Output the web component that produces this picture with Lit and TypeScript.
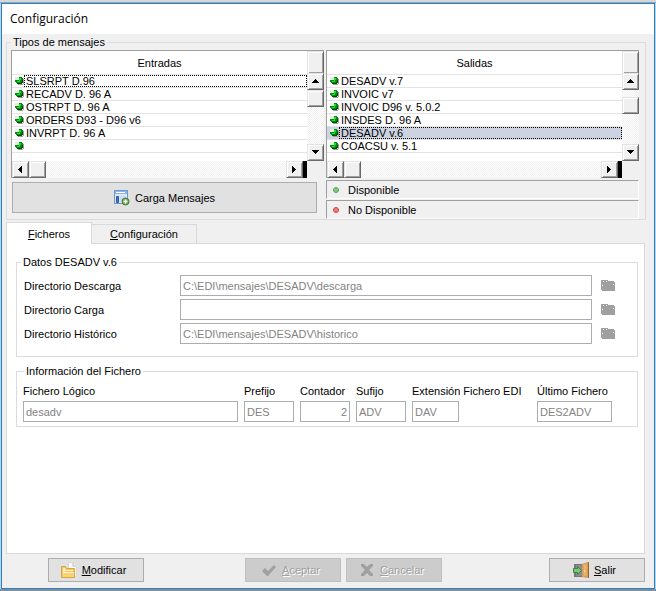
import { LitElement, html, svg, css } from "lit";
import { customElement, property, state } from "lit/decorators.js";
import { classMap } from "lit/directives/class-map.js";

const base = css`
  * { box-sizing: border-box; }
  button, input, table { font: inherit; color: inherit; }
  button { margin: 0; padding: 0; border-radius: 0; }
  svg { display: block; flex: none; }
`;

@customElement("scroll-arrow")
class ScrollArrow extends LitElement {
  @property() dir = "up";
  static styles = [base, css`
    :host { display: block; width: 17px; height: 17px; flex: none; }
    .key {
      display: grid; place-items: center; width: 100%; height: 100%;
      background: #f0f0f0; border: 1px solid; border-color: #e3e3e3 #696969 #696969 #e3e3e3;
      box-shadow: inset 1px 1px #fff, inset -1px -1px #a0a0a0;
    }
  `];
  render() {
    const shapes: Record<string, string> = {
      up: "M3 1h1v1h1v1h1v1h1v1H0V4h1V3h1V2h1z",
      down: "M0 1h7v1H6v1H5v1H4v1H3V4H2V3H1V2H0z",
      left: "M5 0v7H4V6H3V5H2V4H1V3h1V2h1V1h1V0z",
      right: "M1 0h1v1h1v1h1v1h1v1H4v1H3v1H2v1H1z",
    };
    return html`<button class="key" aria-label=${this.dir}>
      <svg width="7" height="7" viewBox="0 0 7 7" shape-rendering="crispEdges"><path d=${shapes[this.dir]} /></svg>
    </button>`;
  }
}

@customElement("message-list")
class MessageList extends LitElement {
  @property() heading = "";
  @property({ type: Array }) rows: string[] = [];
  @property({ type: Number }) current = 0;
  @property({ type: Boolean }) filled = false;
  @property({ type: Boolean }) scrolled = false;
  static styles = [base, css`
    :host {
      display: grid; grid-template-columns: minmax(0, 1fr) 17px; grid-template-rows: 1fr 17px;
      border-top: 1px solid #a0a0a0; border-left: 1px solid #a0a0a0; background: #fff;
    }
    table { width: 100%; border-collapse: separate; border-spacing: 0; table-layout: fixed; align-self: start; }
    th { height: 24px; padding: 0; font-weight: normal; text-align: center; border-bottom: 1px solid #e3e3e3; }
    td { height: 13px; padding: 0; border-bottom: 1px solid #e3e3e3; }
    .line { display: flex; align-items: center; height: 12px; padding-left: 3px; }
    .name { flex: 1; height: 12px; line-height: 12px; padding-left: 2px; white-space: nowrap; }
    .focus .name { outline: 1px dotted #000; outline-offset: -1px; }
    .fill { background: #cdd3e1; }
    .track {
      display: flex;
      background: repeating-conic-gradient(#fff 0 25%, #f0f0f0 0 50%) 0 0 / 2px 2px;
    }
    .vertical { flex-direction: column; }
    .cap { height: 22px; }
    .cap, .thumb {
      background: #f0f0f0; border: 1px solid; border-color: #e3e3e3 #696969 #696969 #e3e3e3;
      box-shadow: inset 1px 1px #fff, inset -1px -1px #a0a0a0;
    }
    .cap { border-bottom: 0; }
    .thumb { width: 17px; height: 17px; flex: none; }
    .lower { margin-top: 7px; }
    .end { margin-top: auto; }
    .far { margin-left: auto; }
    .stop { width: 4px; background: #000; }
    .corner { background: #f0f0f0; }
  `];
  render() {
    return html`
      <table>
        <thead><tr><th scope="col">${this.heading}</th></tr></thead>
        <tbody>
          ${this.rows.map((r, i) => html`
            <tr class=${classMap({ focus: i === this.current, fill: this.filled && i === this.current })}>
              <td><div class="line">
                <svg width="9" height="9" viewBox="0 0 9 9" shape-rendering="crispEdges">
                  <path d="M8 2h1v5H8v1H3V7h5z" fill="#9c9c9c" />
                  <path d="M4 0h3v1h1v5H7v1H2V6H1V5H0V3h4z" fill="#078a10" />
                  <path d="M0 0h4v3H0z" fill="#e4ece4" />
                  <path d="M4 1h2v2H5v2H2V4h2z" fill="#1fe02a" />
                  <path d="M7 3h1v3H7v1H2V6h4V5h1z" fill="#04470a" />
                </svg>
                <span class="name">${r}</span>
              </div></td>
            </tr>`)}
        </tbody>
      </table>
      <div class="track vertical">
        <div class="cap"></div>
        <scroll-arrow dir="up"></scroll-arrow>
        <div class=${classMap({ thumb: true, lower: this.scrolled })}></div>
        <scroll-arrow class="end" dir="down"></scroll-arrow>
      </div>
      <div class="track">
        <scroll-arrow dir="left"></scroll-arrow>
        <div class="thumb"></div>
        <scroll-arrow class="far" dir="right"></scroll-arrow>
        <div class="stop"></div>
      </div>
      <div class="corner"></div>
    `;
  }
}

const icons = {
  load: svg`<svg width="16" height="16" viewBox="0 0 16 16">
    <rect x=".5" y=".5" width="13" height="13" fill="#dbe8fa" stroke="#6d98d0" />
    <path d="M1 1h12v3H1z" fill="#8fb4e8" /><path d="M2 2h9v1H2z" fill="#fff" />
    <path d="M2.5 6.5h2v6h-2z" fill="#4c78bd" stroke="#2e5aa0" /><path d="M6 6h6v6H6z" fill="#c9dcf6" />
    <circle cx="11.5" cy="11.5" r="3.5" fill="#75a957" stroke="#47792f" />
    <path d="M9.5 11.5h4M11.5 9.5v4" stroke="#fff" stroke-width="1.4" />
  </svg>`,
  edit: svg`<svg width="16" height="16" viewBox="0 0 16 16">
    <path d="M7.500.5h5l3 3v11h-8z" fill="#f8f8f8" stroke="#dadada" /><path d="M12 1v3h3" fill="none" stroke="#bbb" />
    <path d="M.5 15.500v-11h4l1 2h8v9z" fill="#f3c468" stroke="#dba545" />
    <path d="M2 14V6h2l1 2h7v1H4z" fill="#fff0bd" />
    <path d="M2 15l1-5h10v5z" fill="#f8d373" /><path d="M3 10.500h10" stroke="#fff1bd" />
  </svg>`,
  accept: svg`<svg width="16" height="16" viewBox="0 0 16 16"><path d="M1 9l3-3 3 3 6-6 2 2-8 9H6z" fill="#a0a0a0" /></svg>`,
  cancel: svg`<svg width="16" height="16" viewBox="0 0 16 16"><path d="M2 2h3l3 3 3-3h3v2l-4 4 4 4v2h-3l-3-3-3 3H2v-2l4-4-4-4z" fill="#a0a0a0" /></svg>`,
  exit: svg`<svg width="16" height="16" viewBox="0 0 16 16">
    <path d="M1 2h9v13H1z" fill="#777" /><path d="M3 3h7v11H3z" fill="#8d8d8d" />
    <path d="M9 2l6-2v16l-6-1z" fill="#d79b58" /><path d="M10.500 3l3-1v12l-3-.5z" fill="#e8b577" /><path d="M15.500 0v16" stroke="#9b6329" />
    <path d="M11 8h1v2h-1z" fill="#f7e24c" />
    <path d="M.5 6.500h4v-2l4 4-4 4v-2h-4z" fill="#7cc47a" stroke="#3d8441" />
  </svg>`,
  folder: svg`<svg width="14" height="11" viewBox="0 0 14 11" shape-rendering="crispEdges">
    <path d="M0 0h7v1h6v1h1v9H1v-1H0z" fill="#a0a0a0" /><path d="M2 1h1v1H2zM5 1h1v1H5zM1 5h1v1H1zM12 4h1v1h-1z" fill="#fff" />
  </svg>`,
};

@customElement("app-root")
class AppRoot extends LitElement {
  @state() tab = 0;
  static styles = [base, css`
    :host {
      display: flex; min-height: 100vh; box-sizing: border-box; padding: 3px 1px 2px;
      background: linear-gradient(#d6d6d6 2px, #a4a4a4 2px 3px, #c9d3de 3px calc(100% - 2px), #8c8c8c 0);
      font: 11px/14px "Liberation Sans", Arial, sans-serif; color: #000;
    }
    .window { flex: 1; min-width: 0; display: flex; flex-direction: column; border: 1px solid #1883d7; background: #f0f0f0; }
    .title { margin: 0; height: 30px; padding-left: 8px; background: #fff; font: 12px/30px "Open Sans", "Noto Sans", sans-serif; }
    fieldset { margin: 0; min-width: 0; border: 1px solid #dcdcdc; }
    legend { padding: 0 2px; height: 13px; line-height: 13px; }
    .types {
      margin: 2px 8px 0 4px; padding: 1px 6px 0 4px;
      display: grid; grid-template-columns: minmax(0, 1fr) minmax(0, 1fr); column-gap: 2px;
    }
    message-list { height: 128px; }
    .btn {
      display: flex; align-items: center; justify-content: center; gap: 5px;
      background: #e1e1e1; border: 1px solid #adadad;
    }
    .btn:disabled { background: #ccc; border-color: #bfbfbf; color: #a0a0a0; text-shadow: 1px 1px #fff; }
    .load { height: 31px; margin: 4px 7px 0 1px; }
    .legend { display: grid; row-gap: 1px; padding-top: 2px; }
    .status {
      display: flex; align-items: center; gap: 9px; height: 19px; padding-left: 6px;
      border: 1px solid; border-color: #a0a0a0 #fff #fff #a0a0a0;
    }
    .dot { width: 6px; height: 6px; border-radius: 50%; background: #86c586; border: 1px solid #5da35d; }
    .off { background: #f17a7a; border-color: #d64545; }
    .tabs { display: flex; align-items: flex-end; height: 24px; margin: 0 0 -1px 4px; z-index: 1; }
    .tab { width: 105px; height: 20px; background: #f0f0f0; border: 1px solid #d9d9d9; border-left: 0; }
    .tab.on { width: 86px; height: 22px; background: #fff; border-left: 1px solid #d9d9d9; border-bottom: 0; }
    .panel { flex: 1; margin: 0 9px 0 4px; padding: 12px 6px 12px 9px; background: #fff; border: 1px solid #d9d9d9; }
    .paths { padding: 6px 22px 12px 7px; display: grid; row-gap: 3px; }
    .paths legend { margin-left: -3px; }
    .path { display: grid; grid-template-columns: 156px 1fr 23px; align-items: center; }
    .info legend { margin-left: 1px; }
    input {
      width: 100%; min-width: 0; height: 21px; margin: 0; padding: 0 2px; border: 1px solid #abadb3;
      border-radius: 0; background: #fff; outline: 0;
    }
    input:disabled { color: #838383; }
    .pick { width: 14px; height: 11px; border: 0; background: none; justify-self: end; }
    .info {
      margin-top: 8px; padding: 6px 25px 4px 6px;
      display: grid; grid-template-columns: minmax(0, 1fr) 50px 50px 50px 119px 75px; column-gap: 6px;
    }
    .field { display: grid; row-gap: 3px; white-space: nowrap; min-width: 0; }
    .ext input { width: 47px; }
    .num input { text-align: right; }
    .actions { display: flex; gap: 5px; padding: 4px 9px 6px 46px; }
    .actions .btn { width: 96px; height: 24px; padding-right: 5px; }
    .first { margin-right: 96px; }
    .last { margin-left: auto; }
  `];

  path(id: string, label: string, value: string) {
    return html`<div class="path">
      <label for=${id}>${label}</label>
      <input id=${id} .value=${value} disabled />
      <button class="pick" aria-label="Examinar" disabled>${icons.folder}</button>
    </div>`;
  }

  field(id: string, label: string, value: string, kind = "") {
    return html`<div class="field ${kind}">
      <label for=${id}>${label}</label><input id=${id} .value=${value} disabled />
    </div>`;
  }

  render() {
    return html`
      <main class="window">
        <h1 class="title">Configuración</h1>
        <fieldset class="types">
          <legend>Tipos de mensajes</legend>
          <message-list heading="Entradas"
            .rows=${["SLSRPT D.96", "RECADV D. 96 A", "OSTRPT D. 96 A", "ORDERS D93 - D96 v6", "INVRPT D. 96 A", ""]}
          ></message-list>
          <message-list heading="Salidas" .current=${4} filled scrolled
            .rows=${["DESADV v.7", "INVOIC v7", "INVOIC D96 v. 5.0.2", "INSDES D. 96 A", "DESADV v.6", "COACSU v. 5.1"]}
          ></message-list>
          <button class="btn load">${icons.load}<span>Carga Mensajes</span></button>
          <div class="legend">
            <div class="status"><span class="dot"></span>Disponible</div>
            <div class="status"><span class="dot off"></span>No Disponible</div>
          </div>
        </fieldset>
        <div class="tabs" role="tablist">
          ${[html`<u>F</u>icheros`, html`<u>C</u>onfiguración`].map((t, i) => html`
            <button role="tab" aria-selected=${this.tab === i} @click=${() => (this.tab = i)}
              class=${classMap({ tab: true, on: this.tab === i })}>${t}</button>`)}
        </div>
        <section class="panel" role="tabpanel">
          <fieldset class="paths">
            <legend>Datos DESADV v.6</legend>
            ${this.path("down", "Directorio Descarga", "C:\\EDI\\mensajes\\DESADV\\descarga")}
            ${this.path("up", "Directorio Carga", "")}
            ${this.path("hist", "Directorio Histórico", "C:\\EDI\\mensajes\\DESADV\\historico")}
          </fieldset>
          <fieldset class="info">
            <legend>Información del Fichero</legend>
            ${this.field("logical", "Fichero Lógico", "desadv")}
            ${this.field("prefix", "Prefijo", "DES")}
            ${this.field("counter", "Contador", "2", "num")}
            ${this.field("suffix", "Sufijo", "ADV")}
            ${this.field("ext", "Extensión Fichero EDI", "DAV", "ext")}
            ${this.field("last", "Último Fichero", "DES2ADV")}
          </fieldset>
        </section>
        <footer class="actions">
          <button class="btn first">${icons.edit}<span><u>M</u>odificar</span></button>
          <button class="btn" disabled>${icons.accept}<span><u>A</u>ceptar</span></button>
          <button class="btn" disabled>${icons.cancel}<span><u>C</u>ancelar</span></button>
          <button class="btn last">${icons.exit}<span><u>S</u>alir</span></button>
        </footer>
      </main>
    `;
  }
}
